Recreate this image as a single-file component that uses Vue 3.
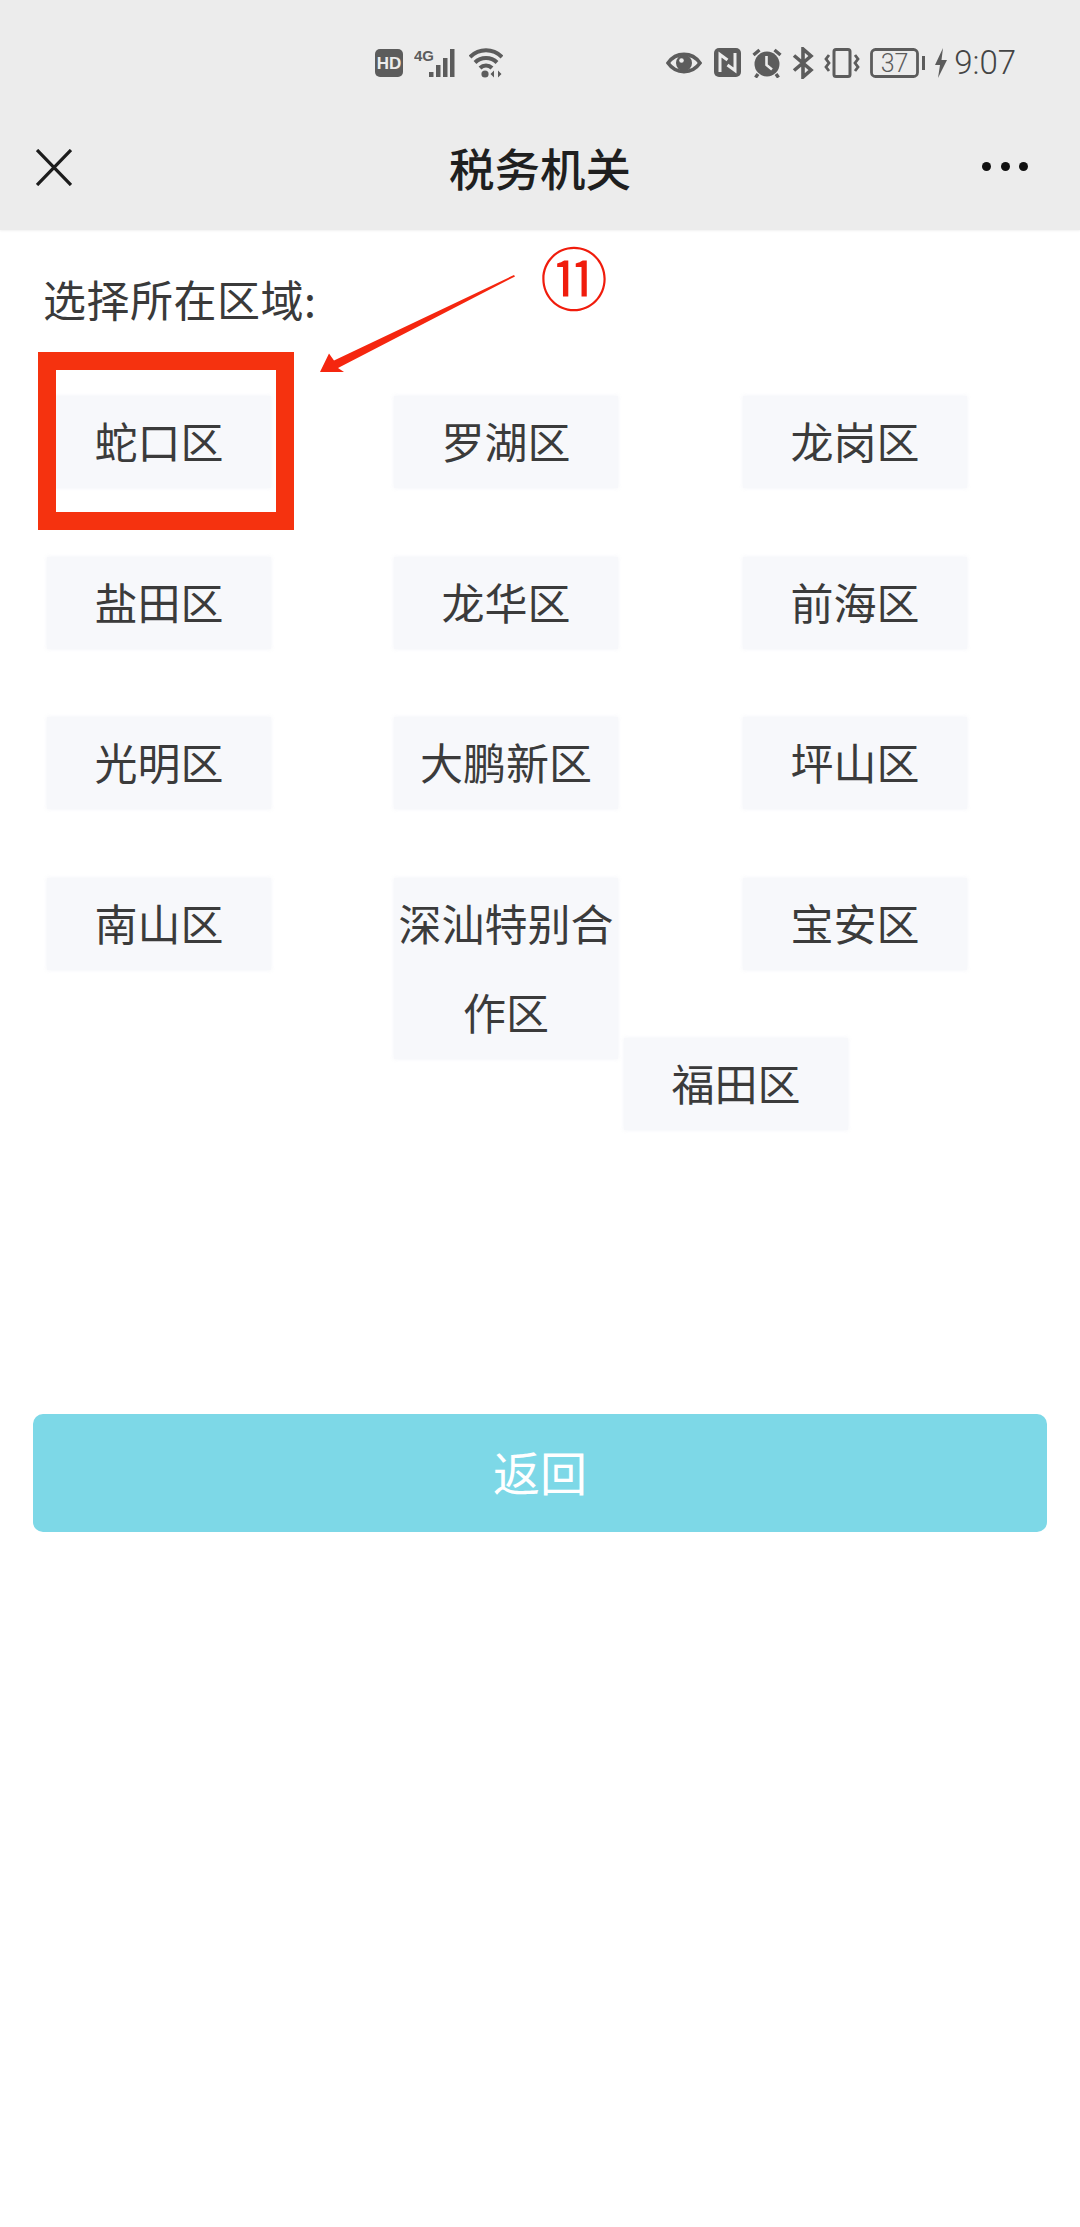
<template>
  <div class="page">
    <header class="top">
      <div class="status">
        <svg class="ic" width="28" height="28" viewBox="0 0 28 28">
          <rect width="28" height="28" rx="5" fill="#5c5c5c" />
          <text x="14" y="20" text-anchor="middle" class="hd">HD</text>
        </svg>
        <svg class="ic signal" width="46" height="30" viewBox="0 0 46 30">
          <text x="0" y="13" class="four">4G</text>
          <rect x="15" y="24" width="4.500" height="5" fill="#5c5c5c" />
          <rect x="22" y="17" width="4.500" height="12" fill="#5c5c5c" />
          <rect x="29" y="10" width="4.500" height="19" fill="#5c5c5c" />
          <rect x="36" y="1" width="4.500" height="28" fill="#5c5c5c" />
        </svg>
        <svg class="ic wifi" width="34" height="30" viewBox="0 0 34 30">
          <path d="M1 9C10 0 24 0 33 9M6 14.500C12 8.500 22 8.500 28 14.500M11 20C14.500 16.500 19.500 16.500 23 20" fill="none" stroke="#5c5c5c" stroke-width="4" />
          <circle cx="16" cy="26" r="3.600" fill="#5c5c5c" />
          <path d="M25 22.500v7l-3.500-3.500zM29 22.500v7l3.500-3.500z" fill="#5c5c5c" />
        </svg>
        <div class="status-right">
          <svg class="ic" width="38" height="26" viewBox="0 0 38 26">
            <path d="M2 13C10 1.500 26 1.500 34 13C26 24.500 10 24.500 2 13Z" fill="none" stroke="#5c5c5c" stroke-width="3.600" />
            <circle cx="18" cy="13" r="8" fill="#5c5c5c" />
            <circle cx="15.500" cy="10.500" r="2.300" fill="#ececec" />
          </svg>
          <svg class="ic" width="28" height="30" viewBox="0 0 28 30">
            <rect width="27" height="29" rx="5" fill="#5c5c5c" />
            <path d="M6 24V6.500L13.500 12M21 5V22.500L13.500 17" fill="none" stroke="#ececec" stroke-width="3" />
          </svg>
          <svg class="ic" width="30" height="30" viewBox="0 0 30 30">
            <circle cx="15" cy="16" r="12.500" fill="#5c5c5c" />
            <path d="M14.500 8v9l5.500 4.500" fill="none" stroke="#ececec" stroke-width="2.600" />
            <path d="M1.500 7L7.500 2M28.500 7L22.500 2M6 26L3.500 29.500M24 26L26.500 29.500" fill="none" stroke="#5c5c5c" stroke-width="3.400" />
          </svg>
          <svg class="ic" width="22" height="32" viewBox="0 0 22 32">
            <path d="M2 8.500L19 23L11 30V2L19 9L2 23.500" fill="none" stroke="#5c5c5c" stroke-width="3.600" />
          </svg>
          <svg class="ic" width="36" height="30" viewBox="0 0 36 30">
            <rect x="10" y="1.500" width="16" height="27" rx="2" fill="none" stroke="#5c5c5c" stroke-width="3" />
            <path d="M5 7L2 11L5 15L2 19L5 23M31 7L34 11L31 15L34 19L31 23" fill="none" stroke="#5c5c5c" stroke-width="2.800" />
          </svg>
          <svg class="ic" width="55" height="30" viewBox="0 0 55 30">
            <rect x="1.500" y="1.500" width="46" height="27" rx="4" fill="none" stroke="#5c5c5c" stroke-width="2.800" />
            <text x="24.500" y="24" text-anchor="middle" class="level">37</text>
            <rect x="52" y="8" width="3.500" height="14" fill="#5c5c5c" />
          </svg>
          <svg class="ic" width="12" height="30" viewBox="0 0 12 30">
            <path d="M8 0L0 17H5L3 30L12 12H6.500Z" fill="#5c5c5c" />
          </svg>
          <span class="time">9:07</span>
        </div>
      </div>
      <div class="titlebar">
        <svg class="close" width="36" height="37" viewBox="0 0 36 37">
          <path d="M1 1L35 36M35 1L1 36" fill="none" stroke="#1c1c1c" stroke-width="3.300" />
        </svg>
        <h1 class="title">税务机关</h1>
        <div class="dots"><i></i><i></i><i></i></div>
      </div>
    </header>

    <main class="content">
      <p class="label">选择所在区域:</p>
      <div class="areas">
        <div v-for="area in areas" :key="area" class="area">{{ area }}</div>
      </div>
      <button class="back">返回</button>

      <div class="mark-box"></div>
      <svg class="mark-arrow" width="200" height="100" viewBox="0 0 200 100">
        <path d="M194 0L195 1.500L18 93L24 97L0 97L9 78.500L14 85.500Z" fill="#f5260f" />
      </svg>
      <span class="mark-num">⑪</span>
    </main>
  </div>
</template>

<script setup>
const areas = [
  "蛇口区",
  "罗湖区",
  "龙岗区",
  "盐田区",
  "龙华区",
  "前海区",
  "光明区",
  "大鹏新区",
  "坪山区",
  "南山区",
  "深汕特别合作区",
  "宝安区",
  "福田区",
];
</script>

<style>
html,
body {
  background: #fff;
}
</style>

<style scoped>
.page {
  width: 1080px;
  min-height: 2227px;
  background: #fff;
  font-family: "Noto Sans CJK SC", "Liberation Sans", sans-serif;
  color: #333;
}

.top {
  height: 230px;
  background: #ececec;
  box-shadow: 0 1px 2px rgba(0, 0, 0, 0.06);
}

.status {
  display: flex;
  align-items: center;
  height: 32px;
  padding: 47px 64px 0 375px;
}

.ic {
  display: block;
  flex: none;
}

.signal {
  margin-left: 11px;
}

.wifi {
  margin-left: 9px;
}

.hd {
  font: 700 17px "Liberation Sans", sans-serif;
  fill: #ececec;
}

.four {
  font: 700 15px "Liberation Sans", sans-serif;
  fill: #5c5c5c;
}

.level {
  font: 300 25px Roboto, sans-serif;
  fill: #5c5c5c;
}

.status-right {
  display: flex;
  align-items: center;
  gap: 10px;
  margin-left: auto;
}

.time {
  margin-left: -3px;
  font: 300 33px/32px Roboto, sans-serif;
  color: #444;
}

.titlebar {
  display: grid;
  grid-template-columns: 1fr auto 1fr;
  align-items: center;
  height: 122px;
  margin-top: 27px;
  padding: 0 36px;
}

.close {
  display: block;
}

.title {
  margin: 0;
  font-size: 45.500px;
  font-weight: 500;
  line-height: 60px;
  color: #1f1f1f;
}

.dots {
  display: flex;
  justify-self: end;
  gap: 9.500px;
  margin: -2px 16px 0 0;
}

.dots i {
  width: 9px;
  height: 9px;
  border-radius: 50%;
  background: #111;
}

.content {
  position: relative;
}

.label {
  margin: 0;
  padding: 38px 0 0 43px;
  font-size: 43px;
  letter-spacing: 0.500px;
  line-height: 60px;
  color: #3a3a3a;
}

/* floats on purpose, the tall item pushes the last one sideways */
.areas {
  display: flow-root;
  margin-top: 68px;
  padding-left: 47px;
}

.area {
  float: left;
  width: 224px;
  margin: 0 6px 68.500px 117px;
  padding-bottom: 3px;
  background: #f7f8fb;
  box-shadow: 0 0 4px rgba(240, 242, 247, 0.9);
  font-size: 43px;
  line-height: 89px;
  text-align: center;
  color: #3b3b3b;
}

.area:nth-child(3n) {
  margin-left: 119px;
}

.area:nth-child(3n + 1) {
  margin-left: 0;
}

.back {
  display: block;
  width: 1014px;
  height: 118px;
  margin: 215.500px 0 0 33px;
  padding: 0 0 6px;
  border: 0;
  border-radius: 10px;
  background: #7dd8e7;
  font-family: inherit;
  font-size: 47px;
  color: #fff;
}

.mark-box {
  position: absolute;
  left: 38px;
  top: 122px;
  box-sizing: border-box;
  width: 256px;
  height: 178px;
  border: 18px solid #f5320f;
}

.mark-arrow {
  position: absolute;
  left: 320px;
  top: 45px;
}

.mark-num {
  position: absolute;
  left: 540px;
  top: 10px;
  font-size: 68px;
  line-height: 72px;
  color: #f01c0c;
}
</style>
